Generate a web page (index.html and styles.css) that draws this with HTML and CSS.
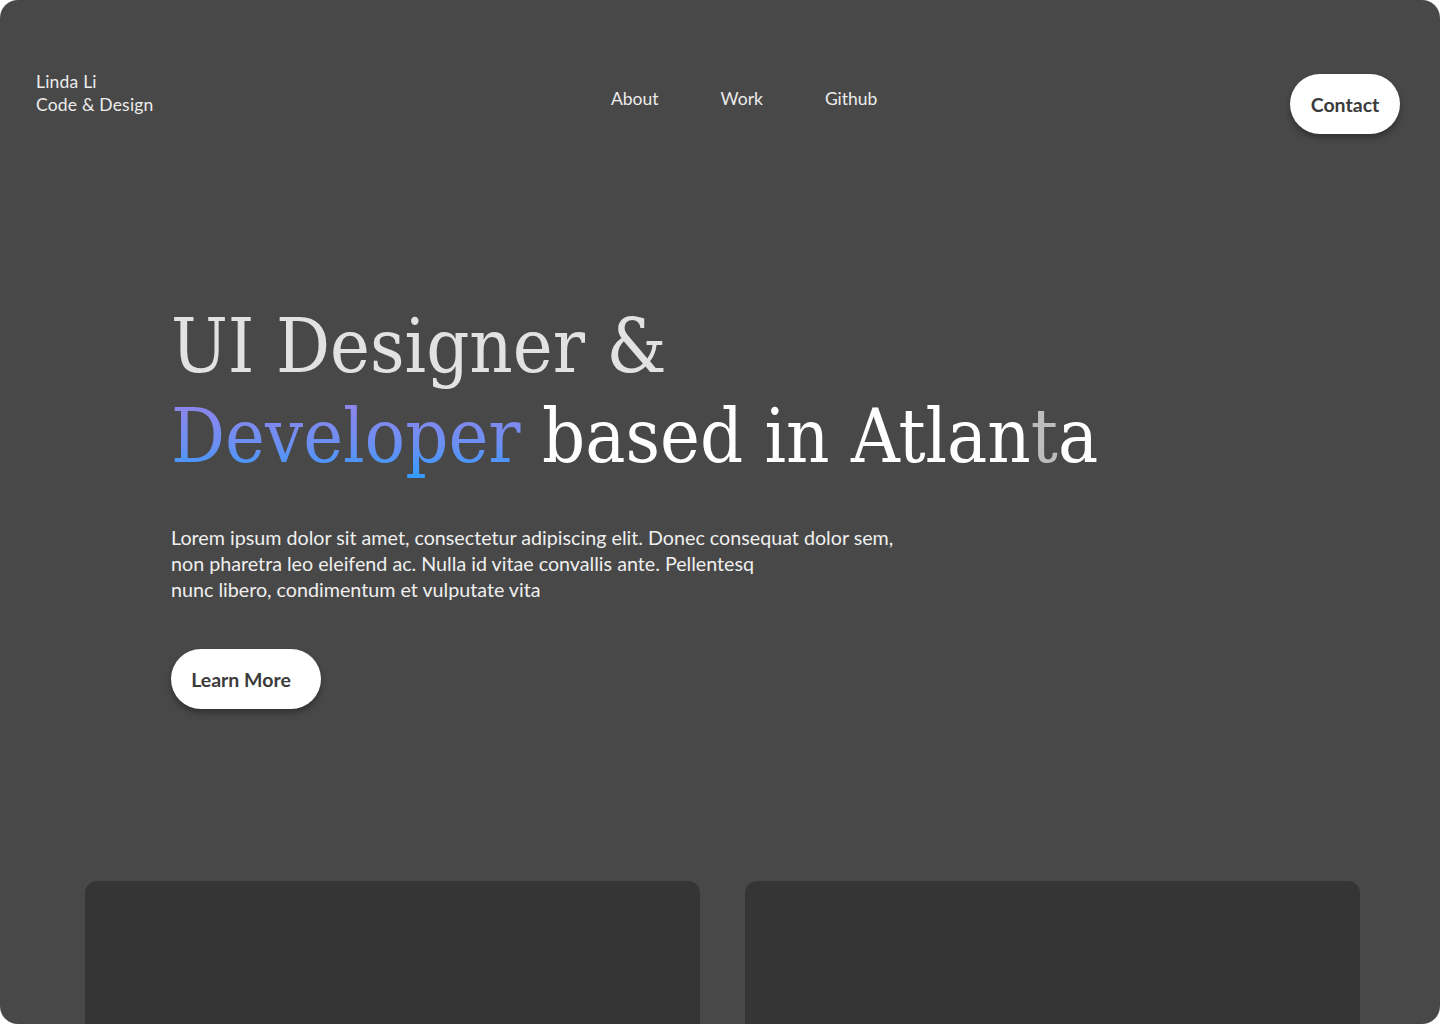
FILE: index.html
```html
<!DOCTYPE html>
<html lang="en">
<head>
<meta charset="utf-8">
<title>Linda Li — Code &amp; Design</title>
<link rel="stylesheet" href="styles.css">
</head>
<body>
<div class="page">
  <header class="header">
    <div class="logo">
      <div>Linda Li</div>
      <div>Code &amp; Design</div>
    </div>
    <nav class="nav">
      <a href="#">About</a>
      <a href="#">Work</a>
      <a href="#">Github</a>
    </nav>
    <a class="btn btn-contact" href="#">Contact</a>
  </header>

  <section class="hero">
    <h1 class="title">
      <span class="line1">UI Designer &amp;</span>
      <span class="line2"><span class="grad">Developer</span> based in Atlan<span class="dim">t</span>a</span>
    </h1>
    <p class="lead">Lorem ipsum dolor sit amet, consectetur adipiscing elit. Donec consequat dolor sem,<br>non pharetra leo eleifend ac. Nulla id vitae convallis ante. Pellentesq<br>nunc libero, condimentum et vulputate vita</p>
    <a class="btn btn-learn" href="#">Learn More</a>
  </section>

  <section class="cards">
    <div class="card"></div>
    <div class="card"></div>
  </section>
</div>
</body>
</html>
```
FILE: styles.css
```css
* { box-sizing: border-box; }
html, body { margin: 0; padding: 0; background: #ffffff; }
body { font-family: "Lato", "Open Sans", sans-serif; }

.page {
  width: 1440px;
  height: 1024px;
  background: #484848;
  border-radius: 18px;
  overflow: hidden;
}

.header {
  display: flex;
  align-items: flex-start;
  padding: 70px 40px 0 36px;
}

.logo {
  width: 120px;
  font-size: 17.5px;
  line-height: 23px;
  color: #ececec;
  letter-spacing: 0.2px;
  white-space: nowrap;
}

.nav {
  display: flex;
  gap: 62px;
  margin-left: 455px;
  margin-top: 17px;
}
.nav a {
  color: #ececec;
  text-decoration: none;
  font-size: 17.5px;
  line-height: 24px;
}

.btn {
  display: inline-flex;
  align-items: center;
  justify-content: center;
  height: 60px;
  border-radius: 30px;
  background: #ffffff;
  color: #3b3b3b;
  font-weight: 700;
  font-size: 19.5px;
  text-decoration: none;
  box-shadow: 0 4px 6px rgba(0, 0, 0, 0.3);
}
.btn-contact {
  width: 110px;
  margin-left: auto;
  margin-top: 4px;
}

.hero {
  padding: 167px 0 0 171px;
}

.title {
  margin: 0;
  font-family: "DejaVu Serif Condensed", "DejaVu Serif", serif;
  font-stretch: condensed;
  font-weight: 400;
  font-size: 75px;
  line-height: 90px;
}
.title span.line1,
.title span.line2 { display: block; white-space: nowrap; }
.line1 { color: #e2e2e2; }
.line2 { color: #ffffff; }
.grad {
  background: linear-gradient(180deg, #9184ea 10%, #6b8ff2 60%, #2f9cff 100%);
  -webkit-background-clip: text;
  background-clip: text;
  color: transparent;
}
.dim { color: #bdbdbd; }

.lead {
  margin: 44px 0 0;
  font-size: 19.7px;
  line-height: 26px;
  color: #efefef;
}

.btn-learn {
  width: 150px;
  margin-top: 46px;
  padding-right: 10px;
}

.cards {
  display: flex;
  gap: 45px;
  padding: 0 0 0 85px;
  margin-top: 172px;
}
.card {
  width: 615px;
  height: 200px;
  background: #353535;
  border-radius: 12px;
}
```
